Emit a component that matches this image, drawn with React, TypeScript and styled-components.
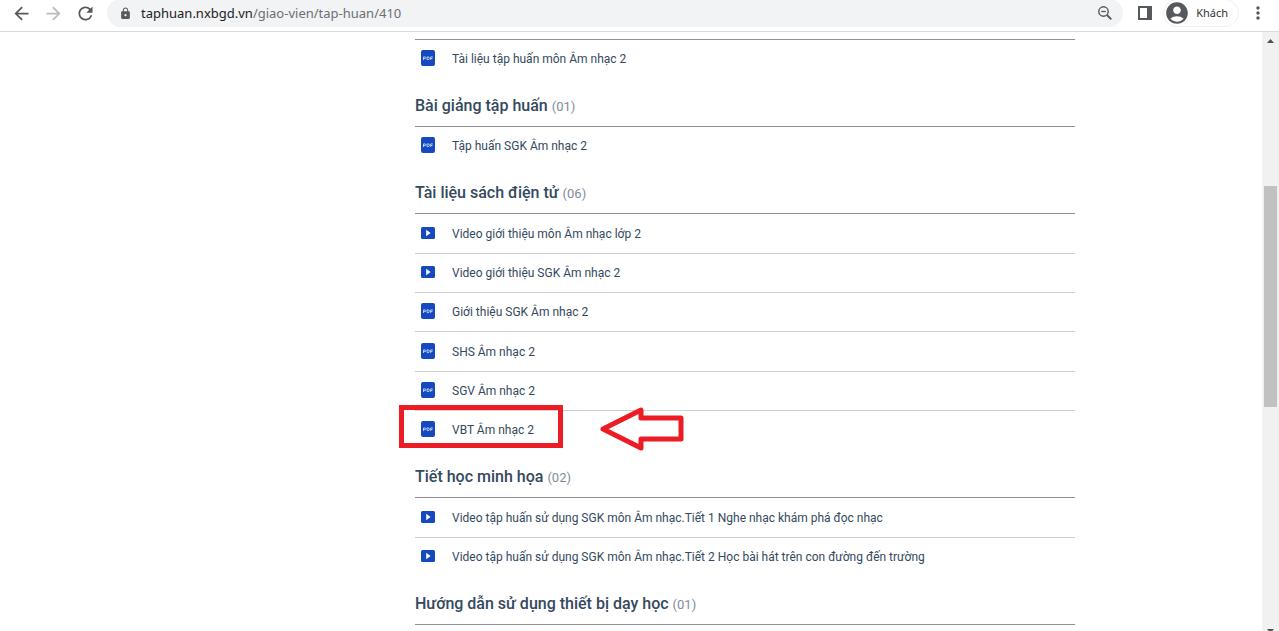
import React from "react";
import styled, { createGlobalStyle } from "styled-components";
import {
  MdAccountCircle,
  MdArrowBack,
  MdArrowForward,
  MdLock,
  MdMoreVert,
  MdRefresh,
} from "react-icons/md";

const GlobalStyle = createGlobalStyle`
  *, *::before, *::after { box-sizing: border-box; }
  body {
    margin: 0;
    background: #ffffff;
    font-family: Roboto, "Liberation Sans", sans-serif;
    color: #34495e;
  }
`;

const Shell = styled.div`
  display: flex;
  flex-direction: column;
  height: 100vh;
  overflow: hidden;
`;

const Toolbar = styled.header`
  display: flex;
  flex: none;
  align-items: center;
  height: 32px;
  padding: 0 9px 5px 9px;
  border-bottom: 1px solid #d8d9db;
  font-family: "Noto Sans", "Open Sans", sans-serif;
`;

const NavButtons = styled.nav`
  display: flex;
  gap: 8px;
  margin-right: 10px;
`;

const IconButton = styled.button<{ $faded?: boolean }>`
  display: flex;
  align-items: center;
  justify-content: center;
  width: 24px;
  height: 24px;
  padding: 0;
  border: 0;
  background: none;
  color: ${(p) => (p.$faded ? "#b9bbbe" : "#55585c")};
`;

const AddressBar = styled.form`
  display: flex;
  flex: 1;
  align-items: center;
  height: 28px;
  padding: 0 6px 0 12px;
  border-radius: 14px;
  background: #f1f3f4;
  color: #55585c;
`;

const AddressText = styled.div`
  display: flex;
  flex: 1;
  margin-left: 9px;
`;

const AddressInput = styled.input<{ $muted?: boolean }>`
  field-sizing: content;
  padding: 0;
  border: 0;
  outline: 0;
  background: none;
  font: inherit;
  font-size: 13px;
  line-height: 20px;
  color: ${(p) => (p.$muted ? "#6b6f74" : "#202124")};
`;

const Actions = styled.div`
  display: flex;
  align-items: center;
  margin-left: 10px;
`;

const Profile = styled.button`
  display: flex;
  align-items: center;
  gap: 6px;
  height: 28px;
  margin: 0 7px 0 6px;
  padding: 0 10px 0 0;
  border: 1px solid #eeeff0;
  border-radius: 14px;
  background: #ffffff;
  font: inherit;
  font-size: 11px;
  line-height: 16px;
  color: #2f3134;
  svg { color: #55585c; }
`;

const Viewport = styled.div`
  display: flex;
  flex: 1;
  min-height: 0;
`;

const Page = styled.div`
  flex: 1;
  overflow: hidden;
`;

const Container = styled.div`
  display: flex;
  max-width: 888px;
  margin: 0 auto;
  padding-top: 7px;
`;

const SideColumn = styled.aside`
  flex: 0 1 228px;
`;

const Main = styled.main`
  flex: 1;
`;

const SectionTitle = styled.h2`
  display: flex;
  align-items: baseline;
  gap: 4px;
  margin: 0;
  padding: 15px 0 8px;
  font-size: 16px;
  font-weight: 500;
  line-height: 24px;
`;

const Count = styled.span`
  font-size: 13px;
  font-weight: 400;
  line-height: 20px;
  color: #7f8c9a;
`;

const List = styled.ul`
  margin: 0;
  padding: 0;
  border-top: 1px solid #8f9194;
  list-style: none;
`;

const Item = styled.li`
  position: relative;
  height: 39px;
  border-bottom: 1px solid #cdcfd1;
  &:nth-child(3n + 1):not(:last-child) { height: 40px; }
  &:last-child { border-bottom-color: transparent; }
`;

const ItemLink = styled.a`
  display: flex;
  align-items: center;
  gap: 17px;
  height: 100%;
  padding-left: 6px;
  font-size: 12px;
  line-height: 20px;
  color: inherit;
  text-decoration: none;
  svg { flex: none; }
`;

const Highlight = styled.div`
  position: absolute;
  top: -6px;
  left: -16px;
  width: 164px;
  height: 43px;
  border: 5px solid #ec1c24;
  pointer-events: none;
`;

const Pointer = styled.svg`
  position: absolute;
  top: -6px;
  left: 184px;
`;

const ScrollTrack = styled.div`
  display: flex;
  flex: none;
  flex-direction: column;
  align-items: center;
  width: 17px;
  margin-bottom: -8px;
  background: #f1f1f1;
`;

const ScrollButton = styled.button`
  display: flex;
  flex: none;
  align-items: center;
  justify-content: center;
  width: 17px;
  height: 17px;
  padding: 0;
  border: 0;
  background: none;
`;

const ScrollGap = styled.div<{ $grow: number }>`
  flex: ${(p) => p.$grow} 1 0;
`;

const ScrollThumb = styled.div`
  flex: 221 1 0;
  width: 13px;
  background: #c1c1c1;
`;

const PdfIcon = () => (
  <svg width="14" height="18" viewBox="0 0 14 18" aria-hidden="true">
    <rect width="14" height="16" rx="2" fill="#1549bd" />
    <g fill="none" stroke="#c9d7f5" strokeWidth="0.9">
      <path d="M2.5 10V6.9H4.1Q4.9 6.9 4.9 7.7T4.1 8.6H2.5" />
      <path d="M6.1 6.9H7Q8.4 6.9 8.4 8.2T7 9.6H6.1Z" />
      <path d="M9.7 10V6.9H11.8M9.7 8.4H11.5" />
    </g>
  </svg>
);

const VideoIcon = () => (
  <svg width="14" height="18" viewBox="0 0 14 18" aria-hidden="true">
    <rect y="2" width="14" height="12" rx="1.5" fill="#1549bd" />
    <path d="M5.2 4.8L9.6 8L5.2 11.2Z" fill="#ffffff" />
  </svg>
);

const ZoomOutIcon = () => (
  <svg width="14" height="14" viewBox="0 0 14 14" fill="none" stroke="#55585c" aria-hidden="true">
    <circle cx="5.5" cy="5.5" r="4.7" strokeWidth="1.4" />
    <path d="M3.2 5.5H7.8" strokeWidth="1.3" />
    <path d="M9 9L13.3 13.3" strokeWidth="1.8" />
  </svg>
);

const SidePanelIcon = () => (
  <svg width="14" height="14" viewBox="0 0 14 14" aria-hidden="true">
    <path fillRule="evenodd" d="M0 0H14V14H0ZM2 2V12H9V2Z" fill="#55585c" />
  </svg>
);

type Resource = { kind: "pdf" | "video"; label: string; marked?: boolean };
type Section = { title?: string; count?: string; items: Resource[] };

const sections: Section[] = [
  { items: [{ kind: "pdf", label: "Tài liệu tập huấn môn Âm nhạc 2" }] },
  {
    title: "Bài giảng tập huấn",
    count: "(01)",
    items: [{ kind: "pdf", label: "Tập huấn SGK Âm nhạc 2" }],
  },
  {
    title: "Tài liệu sách điện tử",
    count: "(06)",
    items: [
      { kind: "video", label: "Video giới thiệu môn Âm nhạc lớp 2" },
      { kind: "video", label: "Video giới thiệu SGK Âm nhạc 2" },
      { kind: "pdf", label: "Giới thiệu SGK Âm nhạc 2" },
      { kind: "pdf", label: "SHS Âm nhạc 2" },
      { kind: "pdf", label: "SGV Âm nhạc 2" },
      { kind: "pdf", label: "VBT Âm nhạc 2", marked: true },
    ],
  },
  {
    title: "Tiết học minh họa",
    count: "(02)",
    items: [
      { kind: "video", label: "Video tập huấn sử dụng SGK môn Âm nhạc.Tiết 1 Nghe nhạc khám phá đọc nhạc" },
      { kind: "video", label: "Video tập huấn sử dụng SGK môn Âm nhạc.Tiết 2 Học bài hát trên con đường đến trường" },
    ],
  },
  { title: "Hướng dẫn sử dụng thiết bị dạy học", count: "(01)", items: [] },
];

export default function App() {
  return (
    <Shell>
      <GlobalStyle />
      <Toolbar>
        <NavButtons>
          <IconButton aria-label="Back"><MdArrowBack size={21} /></IconButton>
          <IconButton aria-label="Forward" $faded><MdArrowForward size={21} /></IconButton>
          <IconButton aria-label="Reload"><MdRefresh size={21} /></IconButton>
        </NavButtons>
        <AddressBar>
          <MdLock size={13} />
          <AddressText>
            <AddressInput aria-label="Host" defaultValue="taphuan.nxbgd.vn" />
            <AddressInput aria-label="Path" $muted defaultValue="/giao-vien/tap-huan/410" />
          </AddressText>
          <IconButton type="button" aria-label="Zoom out"><ZoomOutIcon /></IconButton>
        </AddressBar>
        <Actions>
          <IconButton aria-label="Side panel"><SidePanelIcon /></IconButton>
          <Profile><MdAccountCircle size={26} />Khách</Profile>
          <IconButton aria-label="Menu"><MdMoreVert size={20} /></IconButton>
        </Actions>
      </Toolbar>
      <Viewport>
        <Page>
          <Container>
            <SideColumn />
            <Main>
              {sections.map((section, i) => (
                <section key={i}>
                  {section.title && (
                    <SectionTitle>
                      {section.title} <Count>{section.count}</Count>
                    </SectionTitle>
                  )}
                  <List>
                    {section.items.map((item) => (
                      <Item key={item.label}>
                        <ItemLink href="#">
                          {item.kind === "pdf" ? <PdfIcon /> : <VideoIcon />}
                          <span>{item.label}</span>
                        </ItemLink>
                        {item.marked && (
                          <>
                            <Highlight />
                            <Pointer width="86" height="48" viewBox="0 0 86 48" aria-hidden="true">
                              <path
                                d="M4 24L42 5V13H82V34H42V43Z"
                                fill="#ffffff"
                                stroke="#ec1c24"
                                strokeWidth="5"
                                strokeLinejoin="round"
                              />
                            </Pointer>
                          </>
                        )}
                      </Item>
                    ))}
                  </List>
                </section>
              ))}
            </Main>
          </Container>
        </Page>
        <ScrollTrack>
          <ScrollButton aria-label="Scroll up">
            <svg width="7" height="4" viewBox="0 0 7 4"><path d="M0 4L3.5 0L7 4Z" fill="#505050" /></svg>
          </ScrollButton>
          <ScrollGap $grow={137} />
          <ScrollThumb />
          <ScrollGap $grow={215} />
          <ScrollButton aria-label="Scroll down">
            <svg width="7" height="4" viewBox="0 0 7 4"><path d="M0 0L3.5 4L7 0Z" fill="#505050" /></svg>
          </ScrollButton>
        </ScrollTrack>
      </Viewport>
    </Shell>
  );
}
